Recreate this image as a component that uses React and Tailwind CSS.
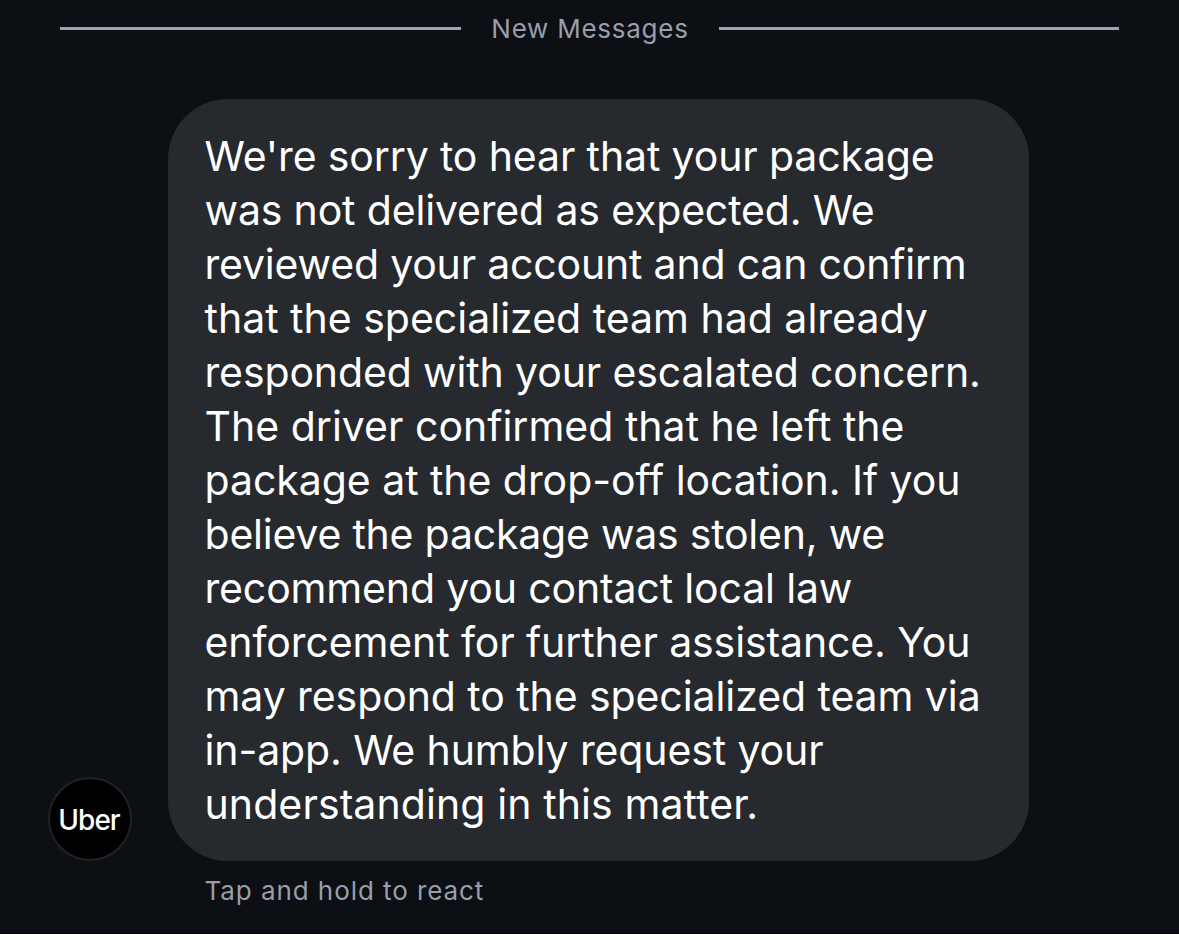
import React from "react";

const lines = [
  { text: "We're sorry to hear that your package", tracking: "tracking-[-0.13px]" },
  { text: "was not delivered as expected. We", tracking: "tracking-[-0.16px]" },
  { text: "reviewed your account and can confirm", tracking: "tracking-[-0.19px]" },
  { text: "that the specialized team had already", tracking: "tracking-[0px]" },
  { text: "responded with your escalated concern.", tracking: "tracking-[-0.13px]" },
  { text: "The driver confirmed that he left the", tracking: "tracking-[0.01px]" },
  { text: "package at the drop-off location. If you", tracking: "tracking-[-0.05px]" },
  { text: "believe the package was stolen, we", tracking: "tracking-[-0.22px]" },
  { text: "recommend you contact local law", tracking: "tracking-[-0.15px]" },
  { text: "enforcement for further assistance. You", tracking: "tracking-[-0.11px]" },
  { text: "may respond to the specialized team via", tracking: "tracking-[-0.08px]" },
  { text: "in-app. We humbly request your", tracking: "tracking-[-0.12px]" },
  { text: "understanding in this matter.", tracking: "tracking-[0.1px]" },
];

function Divider() {
  return (
    <div className="flex h-[56px] items-center px-[60px]">
      <span className="h-[3px] w-[401px] bg-[#a0a4b0]" />
      <span className="flex-1 text-center text-[26px] tracking-[0.75px] whitespace-nowrap text-[#9a9eaa]">
        New Messages
      </span>
      <span className="h-[3px] w-[400px] bg-[#a0a4b0]" />
    </div>
  );
}

function Avatar() {
  return (
    <div className="flex size-[84px] shrink-0 items-center justify-center rounded-full border-2 border-[#202224] bg-black">
      <span className="pt-[2px] pr-[2px] text-[28px] font-medium tracking-[-1px] text-white">Uber</span>
    </div>
  );
}

export default function App() {
  return (
    <div className="h-[934px] w-[1179px] overflow-hidden border-b border-black bg-[#0c0f14] font-['Inter',sans-serif]">
      <Divider />
      <div className="mt-[43px] flex items-end pl-[48px]">
        <Avatar />
        <div className="ml-[36px] h-[762px] w-[861px] rounded-[60px] bg-[#26292d] pt-[30px] pl-[36.5px] text-[41px] leading-[54px] text-white">
          {lines.map((line) => (
            <p key={line.text} className={`whitespace-nowrap ${line.tracking}`}>
              {line.text}
            </p>
          ))}
        </div>
      </div>
      <p className="mt-[10px] pl-[204.5px] text-[26px] leading-[40px] tracking-[0.93px] text-[#9a9eaa]">
        Tap and hold to react
      </p>
    </div>
  );
}
